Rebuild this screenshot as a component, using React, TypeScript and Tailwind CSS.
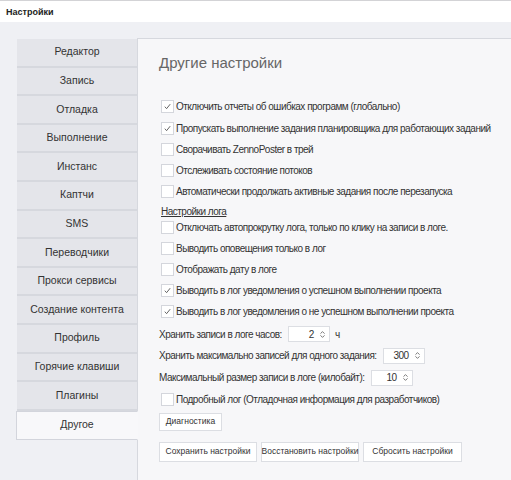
import { ChevronDown, ChevronUp } from "lucide-react";

const tabs = [
  "Редактор",
  "Запись",
  "Отладка",
  "Выполнение",
  "Инстанс",
  "Каптчи",
  "SMS",
  "Переводчики",
  "Прокси сервисы",
  "Создание контента",
  "Профиль",
  "Горячие клавиши",
  "Плагины",
  "Другое",
];

function Check({ checked, label, className = "" }: { checked: boolean; label: string; className?: string }) {
  return (
    <label className={`flex h-[21px] items-center gap-[2px] whitespace-nowrap ${className}`}>
      <span className="flex h-[13px] w-[13px] shrink-0 items-center justify-center border border-[#d4d6dc] bg-white">
        {checked && (
          <svg viewBox="0 0 10 10" className="h-[9px] w-[9px]">
            <path d="M2 5.2 L4 7.4 L8 2.4" fill="none" stroke="#555" strokeWidth="1" />
          </svg>
        )}
      </span>
      <span>{label}</span>
    </label>
  );
}

function Spin({ value }: { value: string }) {
  return (
    <span className="ml-[6px] flex h-[16px] w-[42px] items-center justify-end border border-[#dcdee3] bg-white pr-[3px]">
      <span className="mr-[5px]">{value}</span>
      <span className="flex flex-col text-[#666]">
        <ChevronUp className="-mb-[3px] h-[7px] w-[7px]" strokeWidth={3} />
        <ChevronDown className="h-[7px] w-[7px]" strokeWidth={3} />
      </span>
    </span>
  );
}

function Btn({ label, className }: { label: string; className: string }) {
  return (
    <button className={`flex items-center justify-center whitespace-nowrap border border-[#dcdee3] bg-white text-[8.5px] ${className}`}>
      {label}
    </button>
  );
}

export default function App() {
  return (
    <div className="flex h-[480px] w-[511px] flex-col overflow-hidden bg-[#eff0f4] font-['Liberation_Sans',sans-serif] text-[#333]">
      <div className="h-[22px] shrink-0 border-t border-[#d3d3d6] bg-white pl-[6px] pt-[5px] text-[9px] font-bold text-[#222]">
        Настройки
      </div>
      <div className="flex flex-1 pl-[17px] pt-[16px]">
        <div className="mt-px w-[120px] shrink-0">
          {tabs.map((t) => {
            const active = t === "Другое";
            return (
              <div
                key={t}
                className={
                  active
                    ? "relative z-10 -ml-px -mr-px flex h-[29px] items-center justify-center whitespace-nowrap border border-[#d3d5dc] border-r-transparent bg-[#f8f8fa] text-[10.5px]"
                    : "flex h-[28.6px] items-center justify-center whitespace-nowrap border-b-2 border-[#d6d8de] bg-[#e4e5ea] text-[10.5px]"
                }
              >
                {t}
              </div>
            );
          })}
        </div>
        <div className="flex-1 border-l border-t border-[#d6d8de] bg-[#f7f7f9] pl-[21px] text-[10px] tracking-[-0.5px]">
          <div className="pt-[13px] text-[15px] font-light tracking-normal text-[#666]">Другие настройки</div>
          <div className="mt-[21px] pl-[2px]">
            <Check checked label="Отключить отчеты об ошибках программ (глобально)" className="mb-[1px]" />
            <Check checked label="Пропускать выполнение задания планировщика для работающих заданий" />
            <Check checked={false} label="Сворачивать ZennoPoster в трей" />
            <Check checked={false} label="Отслеживать состояние потоков" />
            <Check checked={false} label="Автоматически продолжать активные задания после перезапуска" />
            <div className="-mb-[2px] flex h-[17px] items-end underline">Настройки лога</div>
            <Check checked={false} label="Отключать автопрокрутку лога, только по клику на записи в логе." />
            <Check checked={false} label="Выводить оповещения только в лог" />
            <Check checked={false} label="Отображать дату в логе" />
            <Check checked label="Выводить в лог уведомления о успешном выполнении проекта" />
            <Check checked label="Выводить в лог уведомления о не успешном выполнении проекта" />
          </div>
          <div className="mt-[2px] whitespace-nowrap">
            <div className="flex h-[21px] items-center">
              Хранить записи в логе часов:
              <Spin value="2" />
              <span className="ml-[5px]">ч</span>
            </div>
            <div className="flex h-[22px] items-center">
              Хранить максимально записей для одного задания:
              <Spin value="300" />
            </div>
            <div className="flex h-[22px] items-center">
              Максимальный размер записи в логе (килобайт):
              <Spin value="10" />
            </div>
            <Check checked={false} label="Подробный лог (Отладочная информация для разработчиков)" className="pl-[2px]" />
          </div>
          <div className="tracking-normal">
            <Btn label="Диагностика" className="mt-[3px] h-[18px] w-[63px]" />
            <div className="mt-[11px] flex gap-[4px]">
              <Btn label="Сохранить настройки" className="h-[20px] w-[98px]" />
              <Btn label="Восстановить настройки" className="h-[20px] w-[98px]" />
              <Btn label="Сбросить настройки" className="h-[20px] w-[99px]" />
            </div>
          </div>
        </div>
      </div>
    </div>
  );
}
